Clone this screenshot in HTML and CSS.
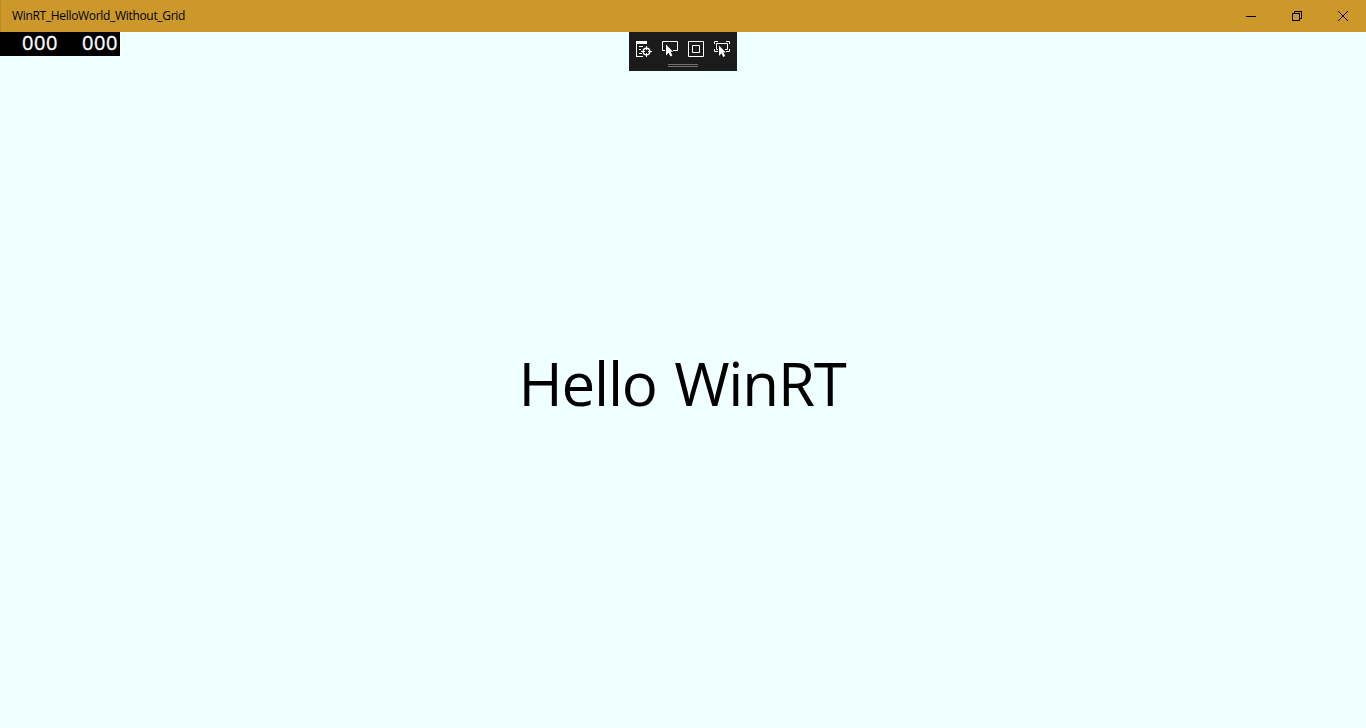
FILE: index.html
```html
<!DOCTYPE html>
<html lang="en">
<head>
<meta charset="utf-8">
<title>WinRT_HelloWorld_Without_Grid</title>
<link rel="stylesheet" href="styles.css">
</head>
<body>
<div class="window">
  <header class="titlebar">
    <span class="title">WinRT_HelloWorld_Without_Grid</span>
    <div class="controls">
      <button class="control" aria-label="Minimize"><svg width="10" height="10" shape-rendering="crispEdges"><path d="M0 5.5H10"/></svg></button>
      <button class="control" aria-label="Restore"><svg width="10" height="10" shape-rendering="crispEdges"><path d="M.5 2.5H7.5V9.5H.5ZM2.5 2V.5H9.5V7.5H8"/></svg></button>
      <button class="control" aria-label="Close"><svg width="10" height="10"><path d="M0 0L10 10M10 0L0 10"/></svg></button>
    </div>
  </header>
  <main class="content">
    <div class="counter"><span>000</span><span>000</span></div>
    <div class="debugbar">
      <div class="tools">
        <svg width="16" height="16"><path class="fill" d="M0 0H11V3H0ZM0 3H1V16H0ZM0 15H7V16H0ZM3 5H7V6H3ZM3 8H5V9H3ZM3 12H6V13H3Z"/><circle class="ring" cx="10.5" cy="10.5" r="3.3"/><path d="M10.5 5V9M10.5 12V16M5 10.5H9M12 10.5H16"/></svg>
        <svg width="16" height="16"><path d="M3 9.5H.5V.5H15.5V9.5H11"/><path class="fill" d="M4 3.5L11 10.8H8.6L10.4 14.6L8.4 15.5L6.6 11.8L4 14.4Z"/></svg>
        <svg width="16" height="16"><path d="M.5 .5H15.5V15.5H.5ZM4.5 4.5H11.5V11.5H4.5Z"/></svg>
        <svg width="16" height="16"><path d="M.5 3V.5H4M12 .5H15.5V3M.5 8V10.5H4M12 10.5H15.5V8M4 8.5H2.5V2.5H13.5V8.5H11"/><path class="fill" d="M5 4.5L11.8 11.4H9.4L11.2 15L9.2 15.9L7.5 12.3L5 14.9Z"/></svg>
      </div>
      <div class="grip"></div>
    </div>
    <h1 class="greeting">Hello WinRT</h1>
  </main>
</div>
</body>
</html>
```
FILE: styles.css
```css
* { box-sizing: border-box; }
body { margin: 0; font-family: "Open Sans", "Noto Sans", sans-serif; }
.window { height: 728px; display: flex; flex-direction: column; overflow: hidden; background: #f0ffff; }
.titlebar { height: 32px; flex: none; display: flex; justify-content: space-between; background: #cc9829; border-left: 1px solid #b98a25; }
.title { padding-left: 11px; font-size: 12px; line-height: 32px; letter-spacing: -.32px; color: #000; white-space: nowrap; }
.controls { display: flex; }
.control { width: 46px; height: 32px; padding: 0; border: 0; background: none; display: flex; align-items: center; justify-content: center; }
svg { display: block; fill: none; stroke-width: 1; }
.control svg { stroke: #000; }
.content { position: relative; flex: 1; display: flex; align-items: center; justify-content: center; }
.counter { position: absolute; left: 0; top: 0; width: 120px; height: 24px; padding-right: 2px; display: flex; justify-content: flex-end; gap: 24px; background: #000; color: #fff; font-size: 20px; font-weight: 500; line-height: 21px; letter-spacing: .56px; -webkit-text-stroke: .3px #fff; }
.counter span { width: 36px; }
.debugbar { position: absolute; left: 629px; top: 0; width: 108px; height: 39px; padding: 9px 7px 0; background: #1b1b1b; }
.tools { display: flex; gap: 10px; }
.tools svg { flex: none; stroke: #fff; }
.tools .fill { fill: #fff; stroke: none; }
.tools .ring { stroke-width: 1.4; }
.grip { width: 30px; height: 3px; margin: 7px 0 0 32px; border-top: 1px solid #707070; border-bottom: 1px solid #707070; }
.greeting { margin: 0; padding: 6px 2px 0 0; font-size: 60px; font-weight: 400; line-height: 80px; letter-spacing: -1.2px; word-spacing: 3px; color: #000; white-space: nowrap; }
```
